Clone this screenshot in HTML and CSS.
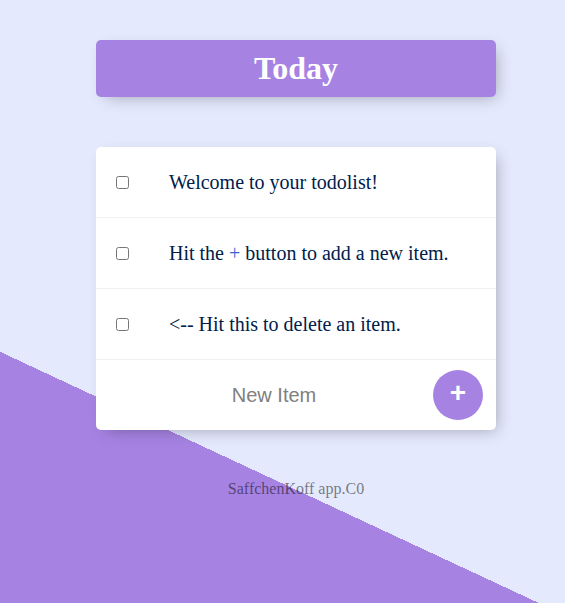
FILE: index.html
```html
<!DOCTYPE html>
<html lang="en">
<head>
<meta charset="utf-8">
<title>To Do List</title>
<link rel="stylesheet" href="styles.css">
</head>
<body>
  <div class="box heading">
    <h1 class="title">Today</h1>
  </div>
  <div class="box list">
    <div class="item">
      <input class="check" type="checkbox">
      <p class="text">Welcome to your todolist!</p>
    </div>
    <div class="item">
      <input class="check" type="checkbox">
      <p class="text">Hit the <span class="plus">+</span> button to add a new item.</p>
    </div>
    <div class="item">
      <input class="check" type="checkbox">
      <p class="text">&lt;-- Hit this to delete an item.</p>
    </div>
    <form class="item new-form">
      <input class="new-input" type="text" name="newItem" placeholder="New Item" autocomplete="off">
      <button class="add-btn" type="button">+</button>
    </form>
  </div>
  <footer class="footer">SaffchenKoff app.C0</footer>
</body>
</html>
```
FILE: styles.css
```css
html {
  background-color: #E4E9FD;
  background-image: linear-gradient(25deg, #A683E3 50%, #E4E9FD 50%);
  background-size: 100% 967px;
  background-repeat: no-repeat;
  background-position: 0 0;
  font-family: "Liberation Serif", "Times New Roman", serif;
}

body {
  margin: 0;
  padding: 40px 0 0 27px;
}

.box {
  width: 400px;
  margin: 0 auto 50px;
  background: #fff;
  border-radius: 5px;
  box-shadow: 5px 5px 15px -5px rgba(0, 0, 0, 0.3);
}

.heading {
  background-color: #A683E3;
  text-align: center;
  padding: 10px;
  box-sizing: border-box;
}

.title {
  margin: 0;
  color: #fff;
  font-size: 32px;
  line-height: 37px;
  font-weight: bold;
}

.item {
  min-height: 70px;
  display: flex;
  align-items: center;
  border-bottom: 1px solid #F1F1F1;
}

.item:last-child {
  border-bottom: 0;
}

.check {
  margin: 20px;
  width: 13px;
  height: 13px;
  flex: none;
}

.text {
  margin: 0;
  padding: 20px;
  font-size: 20px;
  font-weight: normal;
  color: #00204a;
}

.plus {
  color: #3a64c8;
}

.new-form {
  margin: 0 0 0 20px;
}

.new-input {
  box-sizing: border-box;
  width: 307px;
  height: 60px;
  border: none;
  padding: 0 1px 0 10px;
  text-align: center;
  font-family: "Liberation Sans", Arial, sans-serif;
  font-size: 20px;
  background: transparent;
}

.new-input::placeholder {
  color: grey;
  opacity: 1;
}

.new-input:focus {
  outline: none;
}

.add-btn {
  margin-left: 10px;
  width: 50px;
  height: 50px;
  border-radius: 50%;
  border: 0;
  background-color: #A683E3;
  color: #fff;
  font-family: "Liberation Sans", Arial, sans-serif;
  font-size: 28px;
  font-weight: bold;
  line-height: 1;
  padding: 0 0 4px;
}

.footer {
  color: rgba(0, 0, 0, 0.5);
  text-align: center;
  font-size: 16px;
  line-height: 18px;
}
```
